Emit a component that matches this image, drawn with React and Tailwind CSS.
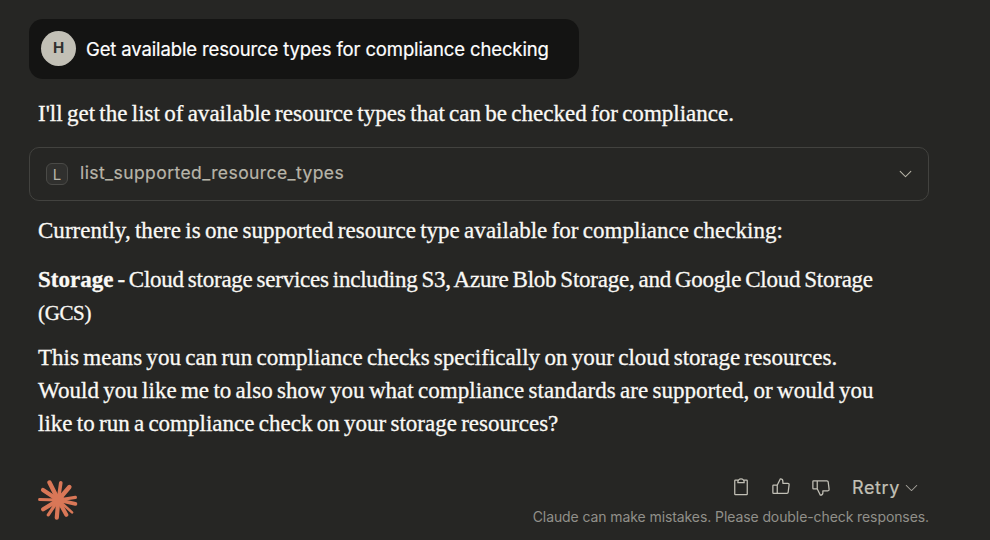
import { PiClipboard, PiThumbsUp, PiThumbsDown, PiCaretDown, PiCaretDownLight } from "react-icons/pi";

const RAYS = [
  [11.5, 2.5, 4.4],
  [22.8, 2.8, 3.6],
  [31.4, 7, 4.4],
  [37.4, 17.4, 3.2],
  [37.4, 23.8, 3.8],
  [34, 32.4, 2.6],
  [28.3, 34.8, 4],
  [18.8, 37.6, 4.2],
  [10.3, 34.8, 3.2],
  [5.2, 29.3, 4.2],
  [1.6, 19.6, 3],
  [5, 9.9, 4.2],
];

function Spark() {
  return (
    <svg width="40" height="40" viewBox="0 0 40 40" stroke="#d97757" strokeLinecap="round" fill="#d97757">
      {RAYS.map(([x, y, w]) => (
        <line key={`${x}-${y}`} x1="20.3" y1="20" x2={x} y2={y} strokeWidth={w} />
      ))}
      <circle cx="20.3" cy="20" r="6" stroke="none" />
    </svg>
  );
}

function UserMessage() {
  return (
    <div className="flex h-[60px] w-[550px] items-center rounded-[14px] bg-[#141413] pl-3">
      <div className="-mt-0.5 flex size-[35px] items-center justify-center rounded-full bg-[#c2c0b6] text-[15px] font-bold text-[#30302e]">
        H
      </div>
      <p className="ml-2.5 mt-0.5 whitespace-nowrap text-[18.5px] tracking-[-0.13px] text-white [-webkit-text-stroke:0.2px_white]">
        Get available resource types for compliance checking
      </p>
    </div>
  );
}

function ToolCall() {
  return (
    <div className="flex h-[54px] items-center rounded-[10px] border border-[#42423f] pl-4 pr-[14px] text-[#b8b5a9]">
      <div className="flex size-[22px] items-center justify-center rounded-md border border-[#4a4a47] bg-[#30302e] text-[15px]">
        L
      </div>
      <span className="-mt-1 ml-3 text-[17.5px] tracking-[0.42px] [-webkit-text-stroke:0.2px_#b8b5a9]">
        list_supported_resource_types
      </span>
      <PiCaretDown className="-mt-0.5 ml-auto size-[17px]" />
    </div>
  );
}

export default function App() {
  return (
    <div className="h-[540px] w-[990px] overflow-hidden bg-[#262624] pl-[29px] pr-[61px] pt-[19px] font-['Inter',sans-serif]">
      <UserMessage />
      <div className="whitespace-nowrap font-['Liberation_Serif',serif] text-[23px] leading-[33px] text-[#faf9f5] [-webkit-text-stroke:0.3px_#faf9f5] [word-spacing:-1.5px]">
        <p className="mb-[17px] mt-[18px] pl-[9px] tracking-[0.016px]">
          I'll get the list of available resource types that can be checked for compliance.
        </p>
        <div className="font-['Inter',sans-serif] [-webkit-text-stroke:0]">
          <ToolCall />
        </div>
        <div className="pl-[9px]">
          <p className="mt-[13px] tracking-[0.026px]">
            Currently, there is one supported resource type available for compliance checking:
          </p>
          <p className="mt-4">
            <strong>Storage</strong>
            <span className="tracking-[-0.24px]"> - Cloud storage services including S3, Azure Blob Storage, and Google Cloud Storage</span>
            <br />
            <span className="text-[21px] tracking-[-0.36px]">(GCS)</span>
          </p>
          <p className="mt-[11px]">
            <span className="tracking-[0.02px]">This means you can run compliance checks specifically on your cloud storage resources.</span>
            <br />
            <span className="tracking-[0.03px]">Would you like me to also show you what compliance standards are supported, or would you</span>
            <br />
            <span className="tracking-[0.01px]">like to run a compliance check on your storage resources?</span>
          </p>
        </div>
      </div>
      <div className="mt-[33px] flex items-start justify-between pl-[9px]">
        <div className="mt-[7px]">
          <Spark />
        </div>
        <div className="flex flex-col items-end">
          <div className="flex h-[30px] items-center pr-[9px] text-[#c2c0b6]">
            <PiClipboard className="-mt-0.5 size-5" />
            <PiThumbsUp className="-mt-0.5 ml-5 size-5" />
            <PiThumbsDown className="-mt-0.5 ml-5 size-5" />
            <span className="-mt-0.5 ml-[21px] text-[18px] tracking-[0.6px] [-webkit-text-stroke:0.2px_#c2c0b6]">Retry</span>
            <PiCaretDownLight className="-mt-0.5 ml-[3px] size-[17px] text-[#a3a199]" />
          </div>
          <p className="mt-1 whitespace-nowrap text-[14px] leading-5 tracking-[-0.09px] text-[#91908a]">
            Claude can make mistakes. Please double-check responses.
          </p>
        </div>
      </div>
    </div>
  );
}
